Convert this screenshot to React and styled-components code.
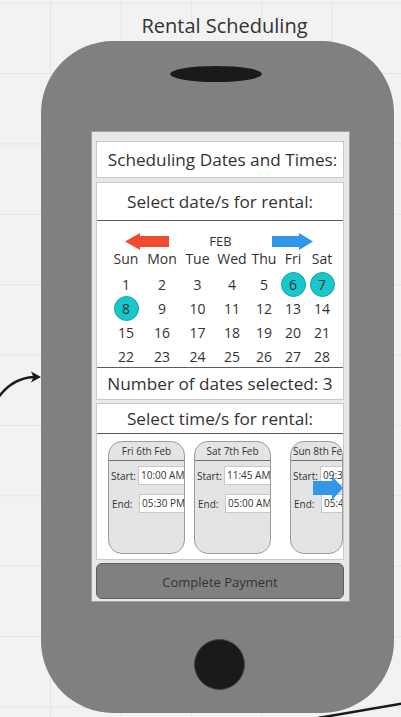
import React from 'react';
import styled, { createGlobalStyle } from 'styled-components';

const GlobalStyle = createGlobalStyle`
  body {
    margin: 0;
    background: #f2f2f2;
    font-family: "Open Sans", "DejaVu Sans", sans-serif;
    color: #333;
  }
`;

const Canvas = styled.div`
  position: relative;
  width: 401px;
  height: 717px;
  overflow: hidden;
  background-color: #f2f2f2;
  background-image:
    linear-gradient(#e5e5e5 1px, transparent 1px),
    linear-gradient(90deg, #e5e5e5 1px, transparent 1px);
  background-size: 70.4px 70.4px;
  background-position: 50px 2.6px;
`;

const Title = styled.div`
  padding: 12px 0 0 48px;
  height: 28px;
  line-height: 28px;
  font-size: 20px;
  text-align: center;
  color: #333;
`;

const Phone = styled.div`
  margin: 1px 0 0 41px;
  width: 353px;
  height: 672px;
  border-radius: 72px;
  background: #808080;
  display: flex;
  flex-direction: column;
  align-items: flex-start;
`;

const Speaker = styled.div`
  margin: 25px 0 0 129px;
  width: 92px;
  height: 16px;
  border-radius: 50%;
  background: #1a1a1a;
`;

const HomeButton = styled.div`
  margin: 37px 0 0 153px;
  width: 51px;
  height: 51px;
  border-radius: 50%;
  background: #1a1a1a;
  border: 1px solid #444;
  box-sizing: border-box;
`;

const Screen = styled.div`
  margin: 49px 0 0 50px;
  width: 259px;
  height: 471px;
  box-sizing: border-box;
  background: #e8e8e8;
  border: 1px solid #a0a0a0;
  padding: 9px 5px 2px 4px;
  display: flex;
  flex-direction: column;
`;

const Panel = styled.div`
  position: relative;
  background: #fff;
  border: 1px solid #c9c9c9;
  height: ${p => p.$h}px;
  margin-top: ${p => p.$mt || 0}px;
  box-sizing: border-box;
  display: flex;
  flex-direction: column;
  overflow: hidden;
`;

const PanelText = styled.div`
  height: ${p => p.$h}px;
  line-height: ${p => p.$h}px;
  font-size: 17.2px;
  text-align: center;
  padding-left: ${p => p.$pl || 0}px;
  white-space: nowrap;
  border-bottom: ${p => (p.$line ? '1px solid #5c5c5c' : 'none')};
  flex: none;
`;

const CalBody = styled.div`
  height: 147px;
  flex: none;
  border-bottom: 1px solid #5c5c5c;
  padding-top: 11px;
  box-sizing: border-box;
`;

const ArrowRow = styled.div`
  display: grid;
  grid-template-columns: 44px 1fr 41px;
  align-items: center;
  height: 18px;
  padding: 0 30px 0 28px;
  font-size: 13px;
  text-align: center;
`;

const DayGrid = styled.div`
  display: grid;
  grid-template-columns: 36px 36px 35px 34px 30px 28px 30px;
  padding-left: 11px;
  grid-auto-rows: ${p => p.$row || 24}px;
  font-size: 14px;
  text-align: center;
  line-height: ${p => p.$row || 24}px;
  margin-top: ${p => p.$mt || 0}px;
`;

const DayCell = styled.div`
  display: flex;
  align-items: center;
  justify-content: center;
`;

const Dot = styled.span`
  width: 25px;
  height: 25px;
  line-height: 25px;
  border-radius: 50%;
  box-sizing: border-box;
  background: ${p => (p.$on ? '#17c7cb' : 'transparent')};
  border: 1px solid ${p => (p.$on ? '#11a4a7' : 'transparent')};
  display: flex;
  align-items: center;
  justify-content: center;
`;

const CardRow = styled.div`
  display: flex;
  gap: 9px;
  padding: 7px 0 0 11px;
`;

const Card = styled.div`
  flex: none;
  width: ${p => p.$w || 77}px;
  height: 113px;
  margin-left: ${p => p.$ml || 0}px;
  box-sizing: border-box;
  background: #e4e4e4;
  border: 1px solid #9c9c9c;
  border-radius: 14px;
  overflow: hidden;
  font-size: 10px;
`;

const CardHead = styled.div`
  height: 18px;
  line-height: 18px;
  border-bottom: 1px solid #707070;
  text-align: center;
  white-space: nowrap;
  padding: 0 2px;
`;

const TimeRow = styled.div`
  display: flex;
  align-items: center;
  height: 19px;
  margin-top: ${p => p.$mt}px;
  white-space: nowrap;
`;

const Label = styled.span`
  flex: none;
  width: 27px;
  padding-left: ${p => p.$pl || 2}px;
`;

const TimeBox = styled.span`
  flex: none;
  width: 50px;
  height: 19px;
  line-height: 17px;
  box-sizing: border-box;
  background: #fff;
  border: 1px solid #c8c8c8;
  padding-left: 2px;
`;

const ScrollArrow = styled.svg`
  position: absolute;
  left: 216px;
  top: 72px;
`;

const PayButton = styled.div`
  margin-top: 3px;
  height: 36px;
  line-height: 36px;
  box-sizing: border-box;
  background: #808080;
  border: 1px solid #5e5e5e;
  border-radius: 6px;
  text-align: center;
  font-size: 13px;
  color: #333;
`;

const Doodle = styled.svg`
  position: absolute;
  left: 0;
  top: 0;
  pointer-events: none;
`;

const weeks = [
  [1, 2, 3, 4, 5, 6, 7],
  [8, 9, 10, 11, 12, 13, 14],
  [15, 16, 17, 18, 19, 20, 21],
  [22, 23, 24, 25, 26, 27, 28],
];
const picked = [6, 7, 8];

const slots = [
  { day: 'Fri 6th Feb', start: '10:00 AM', end: '05:30 PM' },
  { day: 'Sat 7th Feb', start: '11:45 AM', end: '05:00 AM' },
  { day: 'Sun 8th Feb', start: '09:30 AM', end: '05:45 PM', w: 53, ml: 10 },
];

function Arrow({ dir, color, w }) {
  const pts = dir === 'left'
    ? `0,8.5 15,0 15,3 ${w},3 ${w},14 15,14 15,17`
    : `0,3 ${w - 14},3 ${w - 14},0 ${w},8.5 ${w - 14},17 ${w - 14},14 0,14`;
  return (
    <svg width={w} height="17" viewBox={`0 0 ${w} 17`}>
      <polygon points={pts} fill={color} />
    </svg>
  );
}

export default function App() {
  return (
    <Canvas>
      <GlobalStyle />
      <Title>Rental Scheduling</Title>
      <Phone>
        <Speaker />
        <Screen>
          <Panel $h={37}>
            <PanelText $h={35} $pl={5}>Scheduling Dates and Times:</PanelText>
          </Panel>

          <Panel $h={218} $mt={4}>
            <PanelText $h={37} $line>Select date/s for rental:</PanelText>
            <CalBody>
              <ArrowRow>
                <Arrow dir="left" color="#f04b2c" w={44} />
                <span>FEB</span>
                <Arrow dir="right" color="#3097ea" w={41} />
              </ArrowRow>
              <DayGrid $row={20} $mt={-1}>
                {['Sun', 'Mon', 'Tue', 'Wed', 'Thu', 'Fri', 'Sat'].map(d => (
                  <DayCell key={d}>{d}</DayCell>
                ))}
              </DayGrid>
              <DayGrid $mt={3}>
                {weeks.flat().map(n => (
                  <DayCell key={n}>
                    <Dot $on={picked.includes(n)}>{n}</Dot>
                  </DayCell>
                ))}
              </DayGrid>
            </CalBody>
            <PanelText $h={31}>Number of dates selected: 3</PanelText>
          </Panel>

          <Panel $h={157} $mt={3}>
            <PanelText $h={29} $line>Select time/s for rental:</PanelText>
            <CardRow>
              {slots.map(s => (
                <Card key={s.day} $w={s.w} $ml={s.ml}>
                  <CardHead>{s.day}</CardHead>
                  <TimeRow $mt={5}>
                    <Label>Start:</Label>
                    <TimeBox>{s.start}</TimeBox>
                  </TimeRow>
                  <TimeRow $mt={9}>
                    <Label $pl={3}>End:</Label>
                    <TimeBox>{s.end}</TimeBox>
                  </TimeRow>
                </Card>
              ))}
            </CardRow>
            <ScrollArrow width="30" height="24" viewBox="0 0 30 24">
              <polygon points="0,5 19,5 19,0 30,12 19,24 19,19 0,19" fill="#3097ea" />
            </ScrollArrow>
          </Panel>

          <PayButton>Complete Payment</PayButton>
        </Screen>
        <HomeButton />
      </Phone>

      <Doodle width="401" height="717" viewBox="0 0 401 717">
        <path d="M -2 398 Q 12 378 34 377" fill="none" stroke="#1a1a1a" strokeWidth="2.5" />
        <polygon points="41,377 31,371.5 33.5,377 31,382.5" fill="#1a1a1a" />
        <path d="M 318 718 L 403 703.5" fill="none" stroke="#1a1a1a" strokeWidth="2.5" />
      </Doodle>
    </Canvas>
  );
}
